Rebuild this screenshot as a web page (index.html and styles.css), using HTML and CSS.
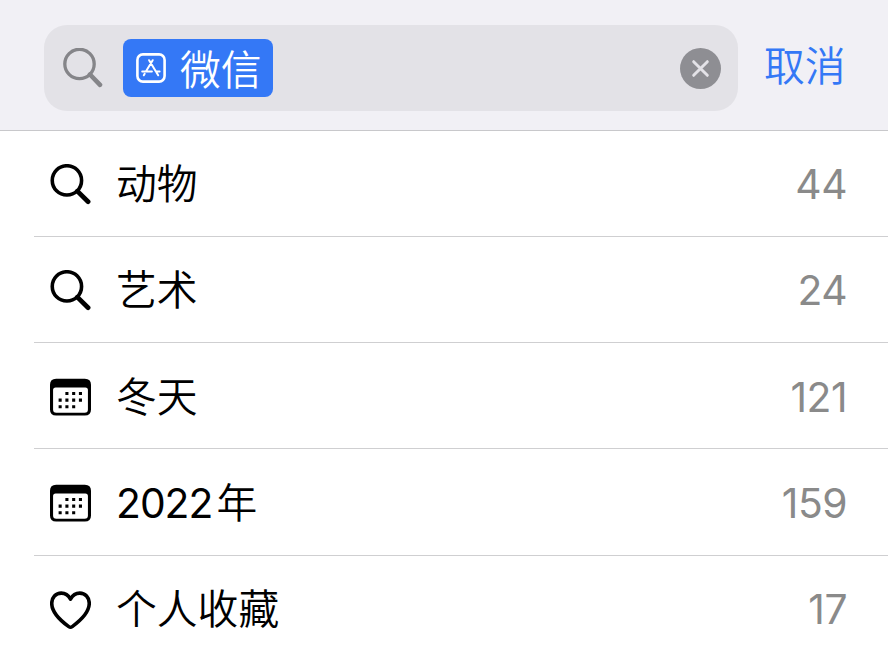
FILE: index.html
```html
<!DOCTYPE html>
<html lang="zh-CN">
<head>
    <meta charset="UTF-8">
    <meta name="viewport" content="width=device-width, initial-scale=1.0">
    <title>搜索</title>
    <link rel="stylesheet" href="styles.css">
</head>
<body>
<header class="search-header">
    <div class="search-field">
        <svg class="search-icon" viewBox="0 0 40 40">
            <circle cx="16.5" cy="16" r="14.7"/>
            <path d="M27 26.5 L37 36.8" class="handle"/>
        </svg>
        <span class="token">
            <svg class="app-icon" viewBox="0 0 30 30">
                <rect x="1.4" y="1.4" width="27.2" height="27.2" rx="5.5"/>
                <path d="M13.1 7.2 L22.2 22.3 M16.7 7.2 L9.9 18.4 M6.2 18.4 H15.9 M19.9 18.4 H23.6 M8.7 20.8 L7.8 22.3"/>
            </svg>
            <span class="token-text">微信</span>
        </span>
        <button class="clear" type="button" aria-label="清除">
            <svg viewBox="0 0 42 42">
                <circle cx="21" cy="21" r="21"/>
                <path d="M14 14 L28 28 M28 14 L14 28"/>
            </svg>
        </button>
    </div>
    <a class="cancel">取消</a>
</header>

<ul class="results">
    <li>
        <svg class="icon" viewBox="0 0 40 40">
            <circle cx="16.5" cy="16" r="14.3"/>
            <path d="M26.7 26.5 L37.2 36.8" class="handle"/>
        </svg>
        <span class="label">动物</span>
        <span class="count">44</span>
    </li>
    <li>
        <svg class="icon" viewBox="0 0 40 40">
            <circle cx="16.5" cy="16" r="14.3"/>
            <path d="M26.7 26.5 L37.2 36.8" class="handle"/>
        </svg>
        <span class="label">艺术</span>
        <span class="count">24</span>
    </li>
    <li>
        <svg class="icon" viewBox="0 0 40 40">
            <path class="frame" fill-rule="evenodd" d="M6 2.6 H34 Q40 2.6 40 8.6 V32.6 Q40 38.6 34 38.6 H6 Q0 38.6 0 32.6 V8.6 Q0 2.6 6 2.6 Z M5.5 11.1 Q3 11.1 3 13.6 V32.6 Q3 35.8 6.2 35.8 H33.8 Q37 35.8 37 32.6 V13.6 Q37 11.1 34.5 11.1 Z"/>
            <path class="dots" d="M15 17 h3 M21.6 17 h3 M28.2 17 h3 M8.4 23.5 h3 M15 23.5 h3 M21.6 23.5 h3 M28.2 23.5 h3 M8.4 30 h3 M15 30 h3 M21.6 30 h3"/>
        </svg>
        <span class="label">冬天</span>
        <span class="count">121</span>
    </li>
    <li>
        <svg class="icon" viewBox="0 0 40 40">
            <path class="frame" fill-rule="evenodd" d="M6 2.6 H34 Q40 2.6 40 8.6 V32.6 Q40 38.6 34 38.6 H6 Q0 38.6 0 32.6 V8.6 Q0 2.6 6 2.6 Z M5.5 11.1 Q3 11.1 3 13.6 V32.6 Q3 35.8 6.2 35.8 H33.8 Q37 35.8 37 32.6 V13.6 Q37 11.1 34.5 11.1 Z"/>
            <path class="dots" d="M15 17 h3 M21.6 17 h3 M28.2 17 h3 M8.4 23.5 h3 M15 23.5 h3 M21.6 23.5 h3 M28.2 23.5 h3 M8.4 30 h3 M15 30 h3 M21.6 30 h3"/>
        </svg>
        <span class="label"><span class="year">2022</span>年</span>
        <span class="count">159</span>
    </li>
    <li>
        <svg class="icon" viewBox="0 0 40 40">
            <path d="M20 9.9 C17.8 5.8 14.5 4 11 4 C5.6 4 1.7 8.3 1.7 14 C1.7 22.6 9.2 30.1 18.3 36.7 Q20 37.9 21.7 36.7 C30.8 30.1 38.3 22.6 38.3 14 C38.3 8.3 34.4 4 29 4 C25.5 4 22.2 5.8 20 9.9 Z"/>
        </svg>
        <span class="label">个人收藏</span>
        <span class="count">17</span>
    </li>
</ul>
</body>
</html>
```
FILE: styles.css
```css
* {
    box-sizing: border-box;
}
body {
    margin: 0;
    height: 655px;
    overflow: hidden;
    background-color: #fff;
    color: #000;
    font-family: Inter, "Noto Sans CJK SC", sans-serif;
    font-size: 40.8px;
    font-weight: 350;
    line-height: 60px;
}
svg {
    display: block;
    flex: none;
    fill: none;
    stroke: currentColor;
    stroke-linecap: round;
    stroke-linejoin: round;
}
.search-header {
    display: flex;
    align-items: flex-start;
    height: 130.6px;
    padding: 25px 40px 0 44px;
    background-color: #f1f0f5;
    border-bottom: 1px solid #c8c8cb;
}
.search-field {
    display: flex;
    flex: none;
    align-items: center;
    width: 694px;
    height: 86px;
    padding: 0 17px 0 19px;
    border-radius: 23px;
    background-color: #e3e2e7;
}
.search-icon {
    width: 40px;
    height: 40px;
    color: #858589;
    stroke-width: 3.3;
}
.handle {
    stroke-width: 4.6;
}
.token {
    display: flex;
    align-items: center;
    gap: 14px;
    width: 150px;
    height: 58px;
    margin-left: 20px;
    padding-left: 13px;
    border-radius: 8px;
    background-color: #3478f6;
    color: #fff;
}
.token-text {
    padding-top: 3px;
}
.app-icon {
    width: 30px;
    height: 30px;
    stroke-width: 2.6;
}
.app-icon path {
    stroke-width: 2;
}
.clear {
    margin-left: auto;
    padding: 0;
    border: 0;
    background: none;
}
.clear svg {
    width: 41px;
    height: 41px;
    stroke: #e3e2e7;
    stroke-width: 3;
}
.clear circle {
    fill: #8e8e93;
    stroke: none;
}
.cancel {
    margin: 11px 0 0 26px;
    color: #3478f6;
    white-space: nowrap;
}
.results {
    margin: 0;
    padding: 0 0 0 34px;
    list-style: none;
}
.results li {
    display: flex;
    align-items: center;
    height: 106.25px;
    padding: 2px 41px 0 16px;
    border-bottom: 1px solid #cfcfd1;
}
.icon {
    width: 41px;
    height: 41px;
    stroke-width: 3.5;
}
.frame {
    fill: #000;
    stroke: none;
}
.dots {
    stroke-width: 3;
    stroke-linecap: butt;
}
.label {
    margin-left: 25px;
}
.year {
    margin-right: 4px;
    font-weight: 400;
    letter-spacing: -1px;
}
.count {
    margin-left: auto;
    color: #8a8a8a;
    font-weight: 400;
    letter-spacing: -0.5px;
}
```
